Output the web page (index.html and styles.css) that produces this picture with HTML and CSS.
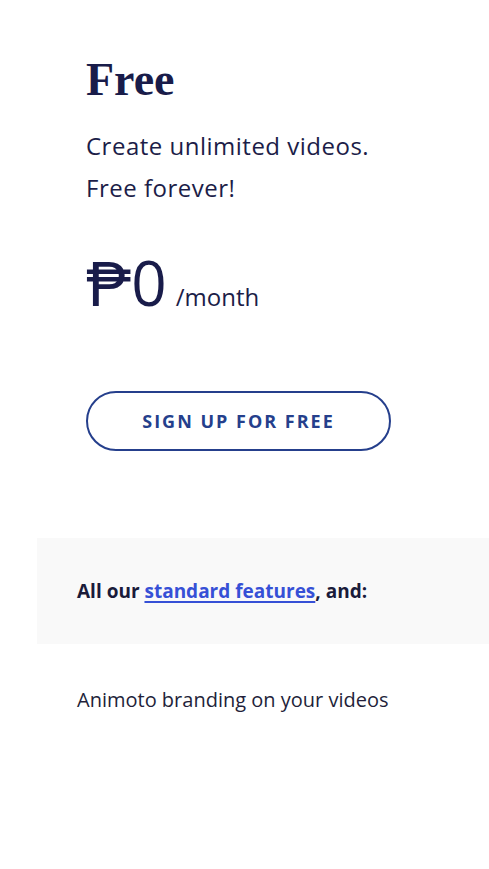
FILE: index.html
```html
<!DOCTYPE html>
<html lang="en">
<head>
<meta charset="utf-8">
<title>Free plan</title>
<link rel="stylesheet" href="styles.css">
</head>
<body>
<main class="plan">
  <section class="plan-top">
    <h1 class="plan-name">Free</h1>
    <p class="plan-desc">Create unlimited videos.<br>Free forever!</p>
    <div class="price">
      <span class="price-amount">₱0</span>
      <span class="price-period">/month</span>
    </div>
    <a class="signup-btn" href="#">SIGN UP FOR FREE</a>
  </section>
  <section class="features-head">
    <p>All our <a href="#" class="features-link">standard features</a>, and:</p>
  </section>
  <ul class="features">
    <li>Animoto branding on your videos</li>
  </ul>
</main>
</body>
</html>
```

FILE: styles.css
```css
html, body {
  margin: 0;
  padding: 0;
  background: #ffffff;
}
body {
  font-family: "Open Sans", Roboto, sans-serif;
  color: #1c1d48;
}
.plan-top {
  padding: 52px 0 0 86px;
}
.plan-name {
  margin: 0;
  font-family: "Liberation Serif", "DejaVu Serif", serif;
  font-weight: 700;
  font-size: 46px;
  line-height: 56px;
  color: #191c4a;
}
.plan-desc {
  margin: 17px 0 0;
  font-size: 24px;
  line-height: 42px;
  letter-spacing: 0.5px;
  color: #1c1d48;
}
.price {
  margin-top: 38px;
  display: flex;
  align-items: baseline;
  gap: 9px;
  height: 70px;
}
.price-amount {
  font-size: 62px;
  line-height: 70px;
  font-weight: 400;
  color: #191c4a;
}
.price-period {
  font-size: 24px;
  color: #1c1d48;
}
.signup-btn {
  margin-top: 74px;
  display: flex;
  align-items: center;
  justify-content: center;
  width: 305px;
  height: 60px;
  box-sizing: border-box;
  border: 2px solid #253f8c;
  border-radius: 30px;
  color: #253f8c;
  font-weight: 700;
  font-size: 18px;
  letter-spacing: 2px;
  text-decoration: none;
}
.features-head {
  margin: 87px 0 0 37px;
  background: #f9f9f9;
  height: 106px;
  display: flex;
  align-items: center;
  padding-left: 40px;
}
.features-head p {
  margin: 0;
  font-size: 19px;
  font-weight: 700;
  color: #1a1b3a;
}
.features-link {
  color: #3650d6;
  text-decoration: underline;
  text-underline-offset: 3px;
  text-decoration-thickness: 2px;
}
.features {
  list-style: none;
  margin: 42px 0 0;
  padding: 0 0 0 77px;
}
.features li {
  font-size: 20px;
  line-height: 28px;
  color: #231f3a;
}
```
